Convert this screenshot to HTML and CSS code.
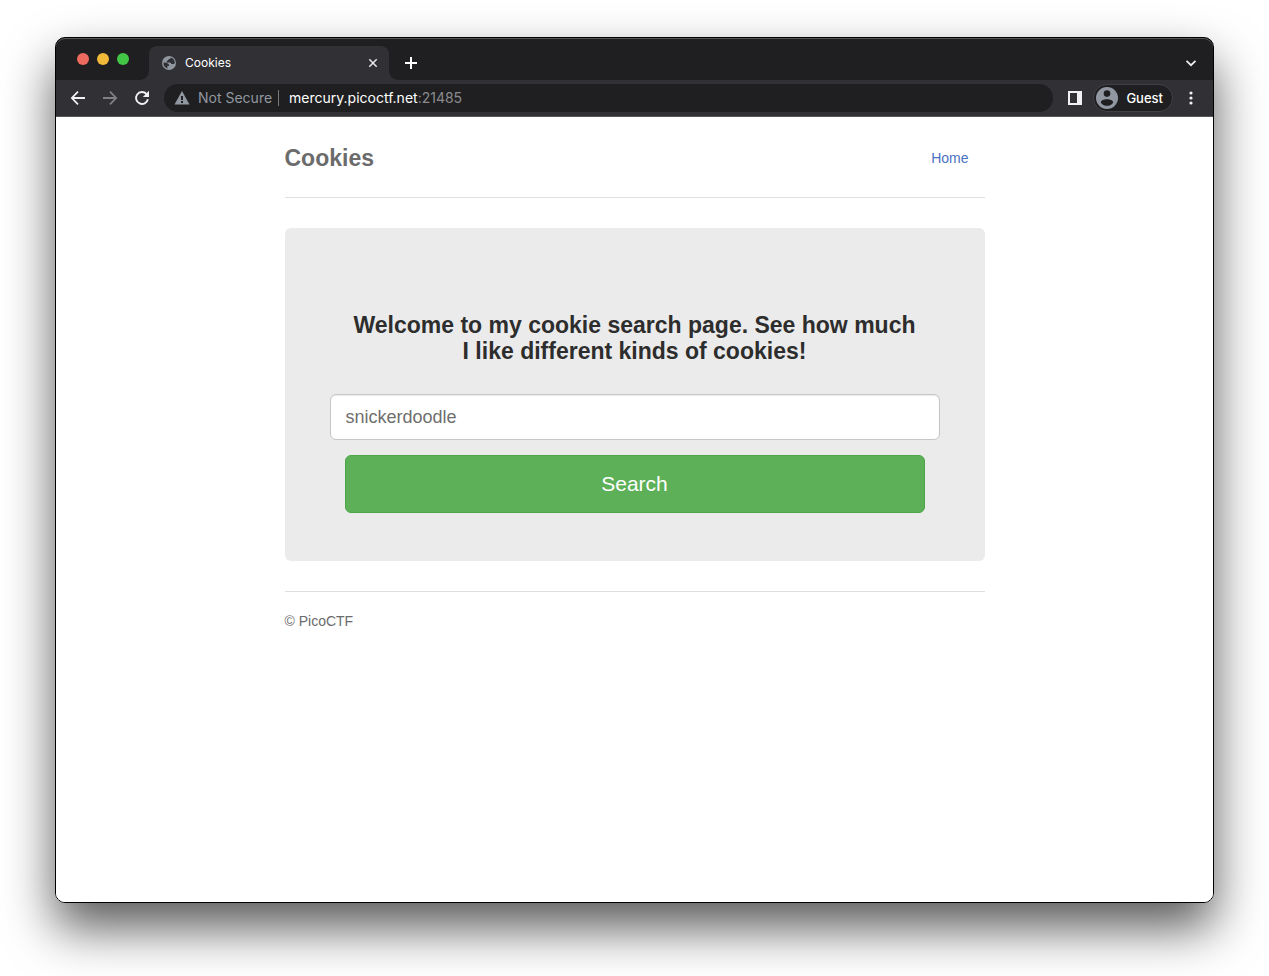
FILE: index.html
```html
<!DOCTYPE html>
<html lang="en">
<head>
<meta charset="utf-8">
<title>Cookies</title>
<link rel="stylesheet" href="styles.css">
</head>
<body>
<div class="window">
  <div class="tabstrip">
    <div class="lights">
      <button class="light light-close" aria-label="Close window"></button>
      <button class="light light-min" aria-label="Minimize window"></button>
      <button class="light light-max" aria-label="Zoom window"></button>
    </div>
    <div class="tab">
      <svg class="tab-icon" width="14" height="14" viewBox="0 0 14 14" aria-hidden="true">
        <circle cx="7" cy="7" r="7" fill="#9197a0"/>
        <path d="M8.800 1.500C8.600 2.600 8 3 6.800 3.100c-.3 1.300-1 1.700-2.200 1.900v1.400h3.200c1 .1 1.300.9 1.400 1.700h3.300A5.700 5.700 0 0 0 8.800 1.500zM1.500 6.600c1.800 0 3.500.3 4.300.8 1 .5 1.400 1.500 1.200 2.600H5.400v2.400A5.700 5.700 0 0 1 1.500 6.600z" fill="#303035"/>
      </svg>
      <span class="tab-title">Cookies</span>
      <button class="icon-button tab-close" aria-label="Close tab">
        <svg width="10" height="10" viewBox="0 0 10 10"><path d="M1.300 1.300l7.400 7.400M8.700 1.300L1.300 8.700" stroke="#e8e8ea" stroke-width="1.500"/></svg>
      </button>
    </div>
    <button class="icon-button new-tab" aria-label="New tab">
      <svg width="14" height="14" viewBox="0 0 14 14"><path d="M7 1v12M1 7h12" stroke="#fff" stroke-width="2"/></svg>
    </button>
    <button class="icon-button tab-search" aria-label="Search tabs">
      <svg width="12" height="12" viewBox="0 0 12 12"><path d="M1.500 3.800L6 8.200l4.500-4.400" fill="none" stroke="#eee" stroke-width="1.700"/></svg>
    </button>
  </div>
  <div class="toolbar">
    <button class="icon-button" aria-label="Back">
      <svg width="16" height="16" viewBox="0 0 16 16"><path d="M15 8H2M8 1.600L1.900 8 8 14.400" fill="none" stroke="#f1f1f3" stroke-width="1.800"/></svg>
    </button>
    <button class="icon-button" aria-label="Forward">
      <svg width="16" height="16" viewBox="0 0 16 16"><path d="M1 8h13M8 1.600L14.100 8 8 14.400" fill="none" stroke="#808084" stroke-width="1.800"/></svg>
    </button>
    <button class="icon-button" aria-label="Reload">
      <svg width="16" height="16" viewBox="0 0 16 16"><path d="M13.900 9.300A6 6 0 1 1 12.500 4" fill="none" stroke="#f1f1f3" stroke-width="1.900"/><path d="M15 .8v6.200H8.800z" fill="#f1f1f3"/></svg>
    </button>
    <div class="omnibox">
      <svg width="16" height="14" viewBox="0 0 16 14" aria-hidden="true"><path d="M8 0L15.500 13.500H.5z" fill="#9197a0"/><path d="M7 5h2v4H7zM7 10h2v2H7z" fill="#1f1f21"/></svg>
      <span class="security">Not Secure</span>
      <span class="divider"></span>
      <span class="url"><span class="host">mercury.picoctf.net</span>:21485</span>
    </div>
    <button class="icon-button" aria-label="Side panel">
      <svg width="14" height="14" viewBox="0 0 14 14"><path fill-rule="evenodd" d="M0 0h14v14H0zM2 2v10h7V2z" fill="#f1f1f3"/></svg>
    </button>
    <button class="profile">
      <svg width="22" height="22" viewBox="0 0 22 22" aria-hidden="true"><circle cx="11" cy="11" r="11" fill="#9197a0"/><circle cx="11" cy="6.600" r="3.300" fill="#1f1f21"/><path d="M4.800 15.400c0-2.300 3.200-3.200 6.200-3.200s6.200.9 6.200 3.200c-1.300 2.200-3.600 3.400-6.200 3.400s-4.900-1.200-6.200-3.400z" fill="#1f1f21"/></svg>
      <span>Guest</span>
    </button>
    <button class="icon-button" aria-label="Menu">
      <svg width="4" height="14" viewBox="0 0 4 14"><g fill="#f1f1f3"><circle cx="2" cy="2" r="1.600"/><circle cx="2" cy="7" r="1.600"/><circle cx="2" cy="12" r="1.600"/></g></svg>
    </button>
  </div>
  <div class="page">
    <div class="container">
      <header class="header">
        <h3 class="brand">Cookies</h3>
        <nav><a class="nav-link" href="#">Home</a></nav>
      </header>
      <main class="jumbotron">
        <h1 class="lead">Welcome to my cookie search page. See how much I like different kinds of cookies!</h1>
        <form class="search-form">
          <input class="field" type="text" name="name" aria-label="Cookie name" placeholder="snickerdoodle">
          <button class="submit" type="button">Search</button>
        </form>
      </main>
      <footer class="footer">© PicoCTF</footer>
    </div>
  </div>
</div>
</body>
</html>
```
FILE: styles.css
```css
* {
  box-sizing: border-box;
}

body {
  display: flex;
  flex-direction: column;
  min-height: 100vh;
  margin: 0;
  padding: 37px 55px 73px;
  background: #fff;
  font-family: "Liberation Sans", Arial, sans-serif;
}

button {
  margin: 0;
  padding: 0;
  border: 0;
  background: none;
  font: inherit;
}

.window {
  display: flex;
  flex: 1;
  flex-direction: column;
  overflow: hidden;
  border: 1px solid #000;
  border-radius: 10px;
  background: linear-gradient(#1f1f21 20px, #fff 20px);
  box-shadow: 0 25px 50px rgba(0, 0, 0, 0.65);
}

.tabstrip,
.toolbar {
  display: flex;
  align-items: center;
  font-family: Inter, sans-serif;
}

.tabstrip {
  height: 42px;
  padding: 0 8px 0 21px;
  border-radius: 9px 9px 0 0;
  background: #1f1f21;
  box-shadow: inset 0 1px 0 #58585a;
}

.lights {
  display: flex;
  gap: 8px;
  margin-right: 20px;
}

.light {
  width: 12px;
  height: 12px;
  border-radius: 50%;
}

.light-close {
  background: #ed6a5e;
}

.light-min {
  background: #f0b93a;
}

.light-max {
  background: #43c645;
}

.tab {
  position: relative;
  display: flex;
  align-items: center;
  align-self: flex-end;
  width: 240px;
  height: 34px;
  padding: 0 2px 0 13px;
  border-radius: 8px 8px 0 0;
  background: #303035;
}

.tab::before,
.tab::after {
  position: absolute;
  bottom: 0;
  width: 8px;
  height: 8px;
  content: "";
}

.tab::before {
  right: 100%;
  background: radial-gradient(circle at 0 0, transparent 7px, #303035 8px);
}

.tab::after {
  left: 100%;
  background: radial-gradient(circle at 100% 0, transparent 7px, #303035 8px);
}

.tab-title {
  flex: 1;
  margin-left: 9px;
  padding-bottom: 2px;
  color: #fff;
  font-size: 12px;
}

.icon-button {
  display: flex;
  flex: none;
  align-items: center;
  justify-content: center;
  width: 28px;
  height: 28px;
}

.new-tab {
  align-self: flex-end;
  height: 34px;
  margin-left: 8px;
}

.tab-search {
  align-self: flex-end;
  height: 34px;
  margin-left: auto;
}

.toolbar {
  gap: 4px;
  height: 37px;
  padding: 0 8px;
  border-bottom: 1px solid #56565a;
  background: #303035;
}

.omnibox {
  display: flex;
  flex: 1;
  align-items: center;
  height: 28px;
  margin: 0 4px;
  padding: 0 10px;
  border-radius: 14px;
  background: #1f1f21;
  color: #8b8b8e;
  font-size: 14px;
  white-space: nowrap;
}

.security,
.url {
  padding-bottom: 2px;
}

.security {
  margin-left: 8px;
  color: #9197a0;
}

.divider {
  width: 1px;
  height: 16px;
  margin: 0 10px 0 6px;
  background: #77777b;
}

.host {
  color: #fff;
}

.profile {
  display: flex;
  align-items: center;
  gap: 8px;
  height: 28px;
  padding: 0 9px 0 2px;
  border: 1px solid #414145;
  border-radius: 14px;
  background: #1f1f21;
  color: #fff;
  font-size: 13px;
  font-weight: 500;
}

.page {
  flex: 1;
  padding: 0 15px;
  background: #fff;
}

.container {
  max-width: 700px;
  margin: 0 auto;
}

.header {
  display: flex;
  align-items: center;
  justify-content: space-between;
  margin-bottom: 30px;
  padding: 21px 0 19px;
  border-bottom: 1px solid #dfdfdf;
}

.brand {
  margin: 0;
  color: #6b6b6b;
  font-size: 23px;
  line-height: 40px;
}

.nav-link {
  display: block;
  padding: 10px 16px;
  color: #4a72c4;
  font-size: 14px;
  line-height: 20px;
  text-decoration: none;
}

.jumbotron {
  padding: 84px 45px 48px;
  border-radius: 6px;
  background: #ebebeb;
}

.lead {
  margin: 0 20px 30px;
  color: #2d2d2d;
  font-size: 23px;
  line-height: 26px;
  text-align: center;
}

.search-form {
  display: flex;
  flex-direction: column;
  gap: 15px;
}

.field {
  height: 46px;
  padding: 0 15px;
  border: 1px solid #c6c6c6;
  border-radius: 6px;
  background: #fff;
  box-shadow: inset 0 1px 1px rgba(0, 0, 0, 0.08);
  color: #555;
  font-family: inherit;
  font-size: 18px;
}

.field::placeholder {
  color: #6e6e6e;
  opacity: 1;
}

.submit {
  margin: 0 15px;
  padding: 14px 24px;
  border: 1px solid #4ca648;
  border-radius: 6px;
  background: #5eb058;
  color: #fff;
  font-size: 21px;
  line-height: 28px;
}

.footer {
  margin-top: 30px;
  padding-top: 19px;
  border-top: 1px solid #dfdfdf;
  color: #6b6b6b;
  font-size: 14px;
  line-height: 20px;
}
```
